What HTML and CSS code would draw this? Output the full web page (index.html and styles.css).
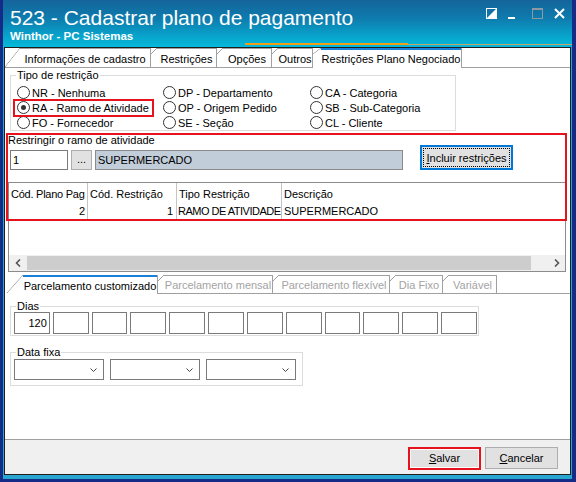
FILE: index.html
```html
<!DOCTYPE html>
<html lang="pt-BR">

<head>
  <meta charset="UTF-8">
  <meta name="viewport" content="width=device-width, initial-scale=1.0">
  <title>523 - Cadastrar plano de pagamento</title>
  <link rel="stylesheet" href="styles.css">
</head>

<body>
  <div class="window">
    <div class="frame">
      <div class="titlebar">
        <div class="title-text">
          <h1>523 - Cadastrar plano de pagamento</h1>
          <div class="subtitle">Winthor - PC Sistemas</div>
        </div>
        <div class="win-buttons">
          <svg class="wb-restore" width="11" height="11" viewBox="0 0 11 11">
            <rect x="0.5" y="0.5" width="10" height="10" fill="none" stroke="#fff" />
            <path d="M10 1 L10 10 L1 10 Z" fill="#fff" />
          </svg>
          <svg class="wb-min" width="7" height="11" viewBox="0 0 7 11">
            <rect x="0" y="9" width="7" height="2" fill="#fff" />
          </svg>
          <svg class="wb-max" width="11" height="11" viewBox="0 0 11 11">
            <rect x="0.5" y="0.5" width="10" height="10" fill="none" stroke="#8d98a3" />
            <rect x="0" y="0" width="11" height="2" fill="#8d98a3" />
          </svg>
          <svg class="wb-close" width="11" height="11" viewBox="0 0 11 11">
            <path d="M1 1 L10 10 M10 1 L1 10" stroke="#fff" stroke-width="2" />
          </svg>
        </div>
      </div>

      <div class="content">
        <!-- abas principais -->
        <div class="tabs top-tabs">
          <div class="tab tab-first t-info">Informações de cadastro</div>
          <div class="tab t-restr">Restrições</div>
          <div class="tab t-opc">Opções</div>
          <div class="tab t-outros">Outros</div>
          <div class="tab active t-plano">Restrições Plano Negociado</div>
        </div>

        <fieldset class="group tipo">
          <legend>Tipo de restrição</legend>
          <div class="options">
            <div class="opt"><span class="radio"></span>NR - Nenhuma</div>
            <div class="opt"><span class="radio"></span>DP - Departamento</div>
            <div class="opt"><span class="radio"></span>CA - Categoria</div>
            <div class="opt"><span class="radio on"></span>RA - Ramo de Atividade</div>
            <div class="opt"><span class="radio"></span>OP - Origem Pedido</div>
            <div class="opt"><span class="radio"></span>SB - Sub-Categoria</div>
            <div class="opt"><span class="radio"></span>FO - Fornecedor</div>
            <div class="opt"><span class="radio"></span>SE - Seção</div>
            <div class="opt"><span class="radio"></span>CL - Cliente</div>
          </div>
        </fieldset>

        <div class="restrict">
          <div class="restrict-main">
            <div class="restrict-label">Restringir o ramo de atividade</div>
            <div class="restrict-inputs">
              <div class="field code">1</div>
              <div class="ellipsis-btn">...</div>
              <div class="field desc">SUPERMERCADO</div>
            </div>
          </div>
          <div class="btn btn-focus"><span class="focus-ring"><u>I</u>ncluir restrições</span></div>
        </div>

        <div class="grid">
          <div class="grid-row grid-head">
            <div class="cell c1">Cód. Plano Pag</div>
            <div class="cell c2">Cód. Restrição</div>
            <div class="cell c3">Tipo Restrição</div>
            <div class="cell c4">Descrição</div>
          </div>
          <div class="grid-row grid-data">
            <div class="cell c1 num">2</div>
            <div class="cell c2 num">1</div>
            <div class="cell c3 caps">RAMO DE ATIVIDADE</div>
            <div class="cell c4 caps">SUPERMERCADO</div>
          </div>
          <div class="hscroll">
            <span class="sb-arrow">
              <svg width="6" height="8" viewBox="0 0 6 8"><path d="M5 0.5 L1.5 4 L5 7.5" fill="none" stroke="#555" stroke-width="1.6" /></svg>
            </span>
            <span class="sb-thumb"></span>
            <span class="sb-arrow sb-right">
              <svg width="6" height="8" viewBox="0 0 6 8"><path d="M1 0.5 L4.5 4 L1 7.5" fill="none" stroke="#555" stroke-width="1.6" /></svg>
            </span>
          </div>
        </div>

        <!-- abas de parcelamento -->
        <div class="tabs bottom-tabs">
          <div class="tab tab-first active b-custom">Parcelamento customizado</div>
          <div class="tab disabled b-mensal">Parcelamento mensal</div>
          <div class="tab disabled b-flex">Parcelamento flexível</div>
          <div class="tab disabled b-dia">Dia Fixo</div>
          <div class="tab disabled b-var">Variável</div>
        </div>

        <fieldset class="group dias">
          <legend>Dias</legend>
          <div class="day-boxes">
            <div class="field day">120</div>
            <div class="field day"></div>
            <div class="field day"></div>
            <div class="field day"></div>
            <div class="field day"></div>
            <div class="field day"></div>
            <div class="field day"></div>
            <div class="field day"></div>
            <div class="field day"></div>
            <div class="field day"></div>
            <div class="field day"></div>
            <div class="field day"></div>
          </div>
        </fieldset>

        <fieldset class="group data-fixa">
          <legend>Data fixa</legend>
          <div class="combos">
            <div class="combo"><svg width="7" height="4" viewBox="0 0 7 4"><path d="M0.5 0.5 L3.5 3.5 L6.5 0.5" fill="none" stroke="#444" /></svg></div>
            <div class="combo"><svg width="7" height="4" viewBox="0 0 7 4"><path d="M0.5 0.5 L3.5 3.5 L6.5 0.5" fill="none" stroke="#444" /></svg></div>
            <div class="combo"><svg width="7" height="4" viewBox="0 0 7 4"><path d="M0.5 0.5 L3.5 3.5 L6.5 0.5" fill="none" stroke="#444" /></svg></div>
          </div>
        </fieldset>

        <div class="bottom-bar">
          <div class="btn btn-action"><span><u>S</u>alvar</span></div>
          <div class="btn btn-action"><span><u>C</u>ancelar</span></div>
        </div>
      </div>
    </div>

    <!-- marcações em vermelho -->
    <div class="mark mark-ra"></div>
    <div class="mark mark-restrict"></div>
    <div class="mark mark-salvar"></div>
  </div>
</body>

</html>
```

FILE: styles.css
```css
* {
  margin: 0;
  padding: 0;
  box-sizing: border-box;
}

body {
  width: 576px;
  height: 482px;
  overflow: hidden;
  font-family: "Liberation Sans", Arial, sans-serif;
  font-size: 11px;
  color: #000;
  background: #142c87;
}

.window {
  position: relative;
  height: 482px;
  padding: 0 4px 3px 3px;
  background: #142c87;
}

.frame {
  height: 479px;
  display: flex;
  flex-direction: column;
  padding: 0 1px 4px;
  background:
    linear-gradient(#f29d16, #f29d16) 242px 43px / 163px 2px no-repeat,
    linear-gradient(#c9a46a, #c9a46a) 405px 44px / 165px 1px no-repeat,
    linear-gradient(180deg, #14649a 0%, #0e7cae 40%, #08a2ca 75%, #06b9da 100%) 0 0 / 100% 47px no-repeat,
    #29a6cf;
}

/* barra de titulo */
.titlebar {
  height: 47px;
  flex: none;
  display: flex;
  justify-content: space-between;
  padding: 0 6px 0 6px;
  color: #fff;
}

.titlebar h1 {
  font-size: 21px;
  font-weight: normal;
  line-height: 24px;
  margin-top: 6px;
}

.subtitle {
  font-size: 11.5px;
  font-weight: bold;
  line-height: 13px;
}

.win-buttons {
  display: flex;
  margin-top: 8px;
  height: 11px;
}

.wb-min {
  margin-left: 11px;
}

.wb-max {
  margin-left: 17px;
}

.wb-close {
  margin-left: 11px;
}

.content {
  flex: 1;
  display: flex;
  flex-direction: column;
  background: #fff;
  border: 1px solid #1e1e1e;
}

/* abas */
.tabs {
  display: flex;
  flex: none;
  height: 20px;
  border-bottom: 1px solid #a0a0a0;
}

.tab {
  --d: 6px;
  --dh: 6px;
  --top: #a0a0a0;
  --top-h: 1px;
  display: flex;
  align-items: center;
  justify-content: center;
  padding: 2px 0 0 var(--d);
  border-right: 1px solid #a0a0a0;
  white-space: nowrap;
  background:
    linear-gradient(var(--top), var(--top)) var(--d) 0 / 100% var(--top-h) no-repeat,
    linear-gradient(to bottom right, transparent calc(50% - 0.6px), #a0a0a0 50%, transparent calc(50% + 0.6px)) 0 0 / var(--d) var(--dh) no-repeat,
    #fff;
}

.tab-first {
  --d: 15px;
  --dh: 19px;
}

.tab.active {
  --top: #1a7fd9;
  --top-h: 2px;
  margin-bottom: -1px;
}

.tab.disabled {
  color: #a3a3a3;
}

.t-info { width: 146px; }
.t-restr { width: 66px; }
.t-opc { width: 55px; }
.t-outros { width: 41px; }
.t-plano { width: 149px; --d: 8px; }

.bottom-tabs {
  height: 19px;
  margin: 3px 0 0 2px;
}

.bottom-tabs .tab-first {
  --d: 16px;
  --dh: 18px;
}

.b-custom { width: 151px; }
.b-mensal { width: 115px; }
.b-flex { width: 117px; }
.b-dia { width: 53px; }
.b-var { width: 54px; }

/* grupos */
.group {
  border: 1px solid #dcdcdc;
  margin-left: 5px;
  flex: none;
}

.group legend {
  margin-left: 5px;
  padding: 0 1px;
  line-height: 12px;
}

.tipo {
  width: 446px;
  margin-top: 1px;
}

.options {
  display: grid;
  grid-template-columns: 146px 147px 1fr;
  padding: 4px 0 0 6px;
}

.opt {
  display: flex;
  align-items: center;
  height: 15px;
  white-space: nowrap;
}

.radio {
  width: 13px;
  height: 13px;
  flex: none;
  border: 1px solid #333;
  border-radius: 50%;
  background: #fff;
  margin-right: 2px;
  display: flex;
  align-items: center;
  justify-content: center;
}

.radio.on::after {
  content: '';
  width: 5px;
  height: 5px;
  border-radius: 50%;
  background: #333;
}

/* restricao */
.restrict {
  display: flex;
  align-items: flex-end;
  margin: 3px 0 0 3px;
  flex: none;
}

.restrict-label {
  line-height: 13px;
}

.restrict-inputs {
  display: flex;
  gap: 3px;
  margin: 3px 0 0 2px;
}

.field {
  height: 20px;
  border: 1px solid #7a7a7a;
  background: #fff;
  display: flex;
  align-items: center;
  padding: 0 2px;
  white-space: nowrap;
}

.code {
  width: 58px;
}

.desc {
  width: 308px;
  background: #c1cdd9;
  border-color: #8a8a8a;
}

.ellipsis-btn {
  width: 21px;
  height: 20px;
  border: 1px solid #adadad;
  background: #e1e1e1;
  display: flex;
  align-items: center;
  justify-content: center;
  padding-bottom: 2px;
}

.btn {
  display: flex;
  align-items: center;
  justify-content: center;
  background: #e1e1e1;
  border: 1px solid #adadad;
  white-space: nowrap;
}

.btn-focus {
  width: 93px;
  height: 25px;
  margin-left: 17px;
  padding: 2px;
  border-color: #0078d7;
  box-shadow: inset 0 0 0 1px #0078d7;
}

.focus-ring {
  flex: 1;
  align-self: stretch;
  display: flex;
  align-items: center;
  justify-content: center;
  border: 1px dotted #000;
}

/* grade */
.grid {
  width: 558px;
  height: 90px;
  margin: 12px 0 0 3px;
  border: 1px solid #8c8c8c;
  display: flex;
  flex-direction: column;
  flex: none;
}

.grid-row {
  display: flex;
}

.grid-head {
  height: 20px;
}

.grid-data {
  height: 16px;
}

.cell {
  display: flex;
  align-items: center;
  padding-left: 2px;
  border-right: 1px solid #c4c4c4;
  white-space: nowrap;
  overflow: hidden;
}

.grid-head .cell {
  padding-top: 2px;
}

.c1 { width: 79px; padding-left: 3px; }
.c2 { width: 89px; }
.c3 { width: 105px; }
.c4 { flex: 1; border-right: none; }

.grid-head .c1 {
  padding-left: 2px;
  letter-spacing: -0.25px;
}

.cell.num {
  justify-content: flex-end;
  padding-right: 2px;
}

.c2.num {
  padding-right: 3px;
}

.c3.caps {
  padding-left: 1px;
  letter-spacing: -0.5px;
}

.hscroll {
  margin-top: auto;
  height: 16px;
  display: flex;
  background: #f0f0f0;
}

.sb-arrow {
  width: 17px;
  display: flex;
  align-items: center;
  justify-content: center;
}

.sb-thumb {
  width: 504px;
  margin: 1px 0 1px 1px;
  background: #cdcdcd;
}

.sb-right {
  margin-left: auto;
}

/* dias */
.dias {
  width: 469px;
  margin-top: 6px;
}

.day-boxes {
  display: grid;
  grid-template-columns: repeat(12, 1fr);
  gap: 3px;
  padding: 0 1px 1px 3px;
}

.day {
  height: 22px;
  justify-content: flex-end;
  padding-right: 2px;
}

.data-fixa {
  width: 293px;
  margin-top: 10px;
}

.combos {
  display: flex;
  gap: 6px;
  padding: 1px 0 5px 3px;
}

.combo {
  width: 90px;
  height: 21px;
  border: 1px solid #7a7a7a;
  display: flex;
  justify-content: flex-end;
  align-items: center;
  padding: 1px 6px 0 0;
}

/* rodape */
.bottom-bar {
  margin-top: auto;
  height: 35px;
  flex: none;
  border-top: 1px solid #a0a0a0;
  background: #f0f0f0;
  display: flex;
  justify-content: flex-end;
  gap: 4px;
  padding: 7px 12px 0 0;
}

.btn-action {
  width: 73px;
  height: 22px;
}

/* marcacoes */
.mark {
  position: absolute;
  border: 2px solid #e5141c;
}

.mark-ra {
  left: 13px;
  top: 99px;
  width: 141px;
  height: 18px;
}

.mark-restrict {
  left: 6px;
  top: 133px;
  width: 561px;
  height: 88px;
}

.mark-salvar {
  left: 408px;
  top: 447px;
  width: 73px;
  height: 23px;
  box-shadow: inset 0 0 0 1px #fff;
}
```
